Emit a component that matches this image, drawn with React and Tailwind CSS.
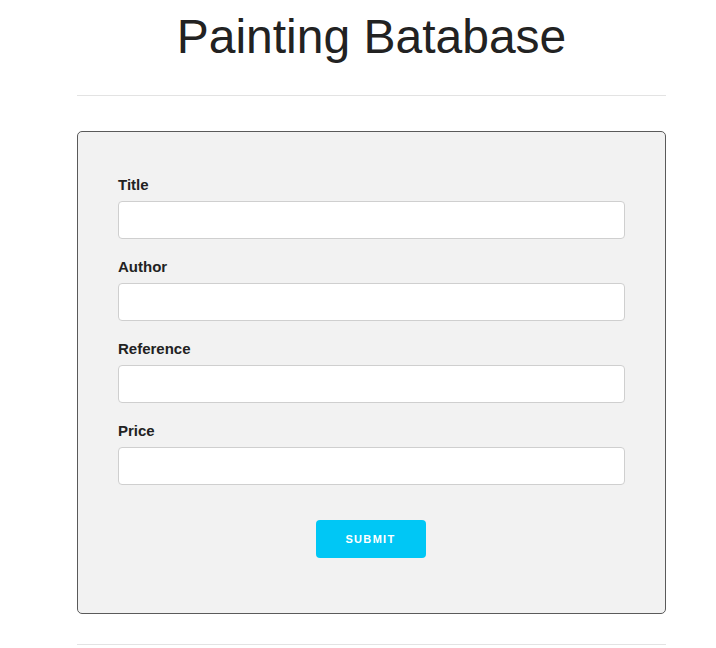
export default function App() {
  const fields = ["Title", "Author", "Reference", "Price"];
  return (
    <div className="bg-white min-h-[648px] font-['Liberation_Sans',Arial,sans-serif] text-[#222]">
      <div className="ml-[77px] w-[589px]">
        <h1 className="text-center text-[48px] leading-[56px] pt-[9px] text-[#222] font-normal">Painting Batabase</h1>
        <div className="mt-[30px] h-px bg-[#e3e3e3]" />
        <form className="mt-[35px] border border-[#5a5a5a] rounded-[5px] bg-[#f2f2f2] pl-[40px] pr-[40px] pt-[44px] pb-[55px] flex flex-col gap-[19px]">
          {fields.map((f) => (
            <div key={f} className="flex flex-col">
              <label className="text-[15px] leading-[17px] font-bold text-[#222] mb-[8px]">{f}</label>
              <input className="h-[38px] bg-white border border-[#cfcfcf] rounded-[4px] outline-none px-2" />
            </div>
          ))}
          <div className="flex justify-center mt-[16px]">
            <button type="button" className="w-[110px] h-[38px] rounded-[4px] bg-[#00c7f5] text-white text-[11px] font-bold tracking-[0.12em] -translate-x-[1px]">SUBMIT</button>
          </div>
        </form>
        <div className="mt-[30px] h-px bg-[#e3e3e3]" />
      </div>
    </div>
  );
}
